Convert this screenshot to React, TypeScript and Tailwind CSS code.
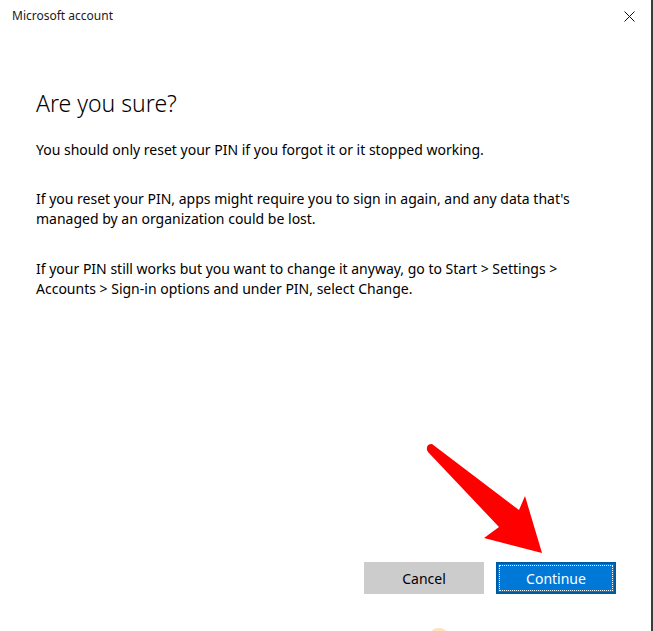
import React from "react";

const font = { fontFamily: '"Noto Sans", "Open Sans", sans-serif' };

// red pointer drawn over the dialog, aiming at the primary button
const Pointer = () => (
  <svg
    className="absolute left-0 top-0 pointer-events-none"
    width="653"
    height="631"
    viewBox="0 0 653 631"
  >
    <path
      d="M427 450 Q426 444 432 444 L519 510 L525 496 L542 553 L484 538 L499 527 L428 452 Z"
      fill="#ff0000"
    />
    <ellipse cx="439" cy="631" rx="7" ry="3" fill="#fde3c0" />
  </svg>
);

const App = () => {
  return (
    <div
      className="relative w-[653px] h-[631px] bg-white overflow-hidden flex"
      style={font}
    >
      <div className="flex-1 flex flex-col">
        <div className="h-[32px] flex items-center justify-between pl-[12px] pr-[15px]">
          <span className="text-[12px] text-[#1a1a1a]">Microsoft account</span>
          <button type="button" className="w-[14px] h-[14px] flex items-center justify-center">
            <svg width="11" height="11" viewBox="0 0 11 11">
              <path d="M0.5 0.5 L10.5 10.5 M10.5 0.5 L0.5 10.5" stroke="#111" strokeWidth="1" />
            </svg>
          </button>
        </div>

        <div className="flex-1 flex flex-col pl-[36px] pr-[35px] pt-[55px] text-black">
          <h1 className="text-[23px] font-light leading-[32px]">Are you sure?</h1>
          <p className="mt-[21px] text-[14px] leading-[20px]">
            You should only reset your PIN if you forgot it or it stopped working.
          </p>
          <p className="mt-[29px] text-[14px] leading-[20px] pr-[40px]">
            If you reset your PIN, apps might require you to sign in again, and any data that's
            managed by an organization could be lost.
          </p>
          <p className="mt-[30px] text-[14px] leading-[20px] pr-[40px]">
            If your PIN still works but you want to change it anyway, go to Start &gt; Settings &gt;
            Accounts &gt; Sign-in options and under PIN, select Change.
          </p>

          <div className="mt-auto mb-[37px] flex justify-end gap-[12px]">
            <button
              type="button"
              className="w-[120px] h-[32px] bg-[#cccccc] text-[14px] text-black"
            >
              Cancel
            </button>
            <button
              type="button"
              className="w-[120px] h-[32px] bg-[#0078d7] border-2 border-[#005a9e] p-[1px] text-[14px] text-white"
            >
              <span className="w-full h-full flex items-center justify-center border border-dotted border-white">
                Continue
              </span>
            </button>
          </div>
        </div>
      </div>
      <div className="w-[2px] bg-[#3c3c3c]" />
      <Pointer />
    </div>
  );
};

export default App;
